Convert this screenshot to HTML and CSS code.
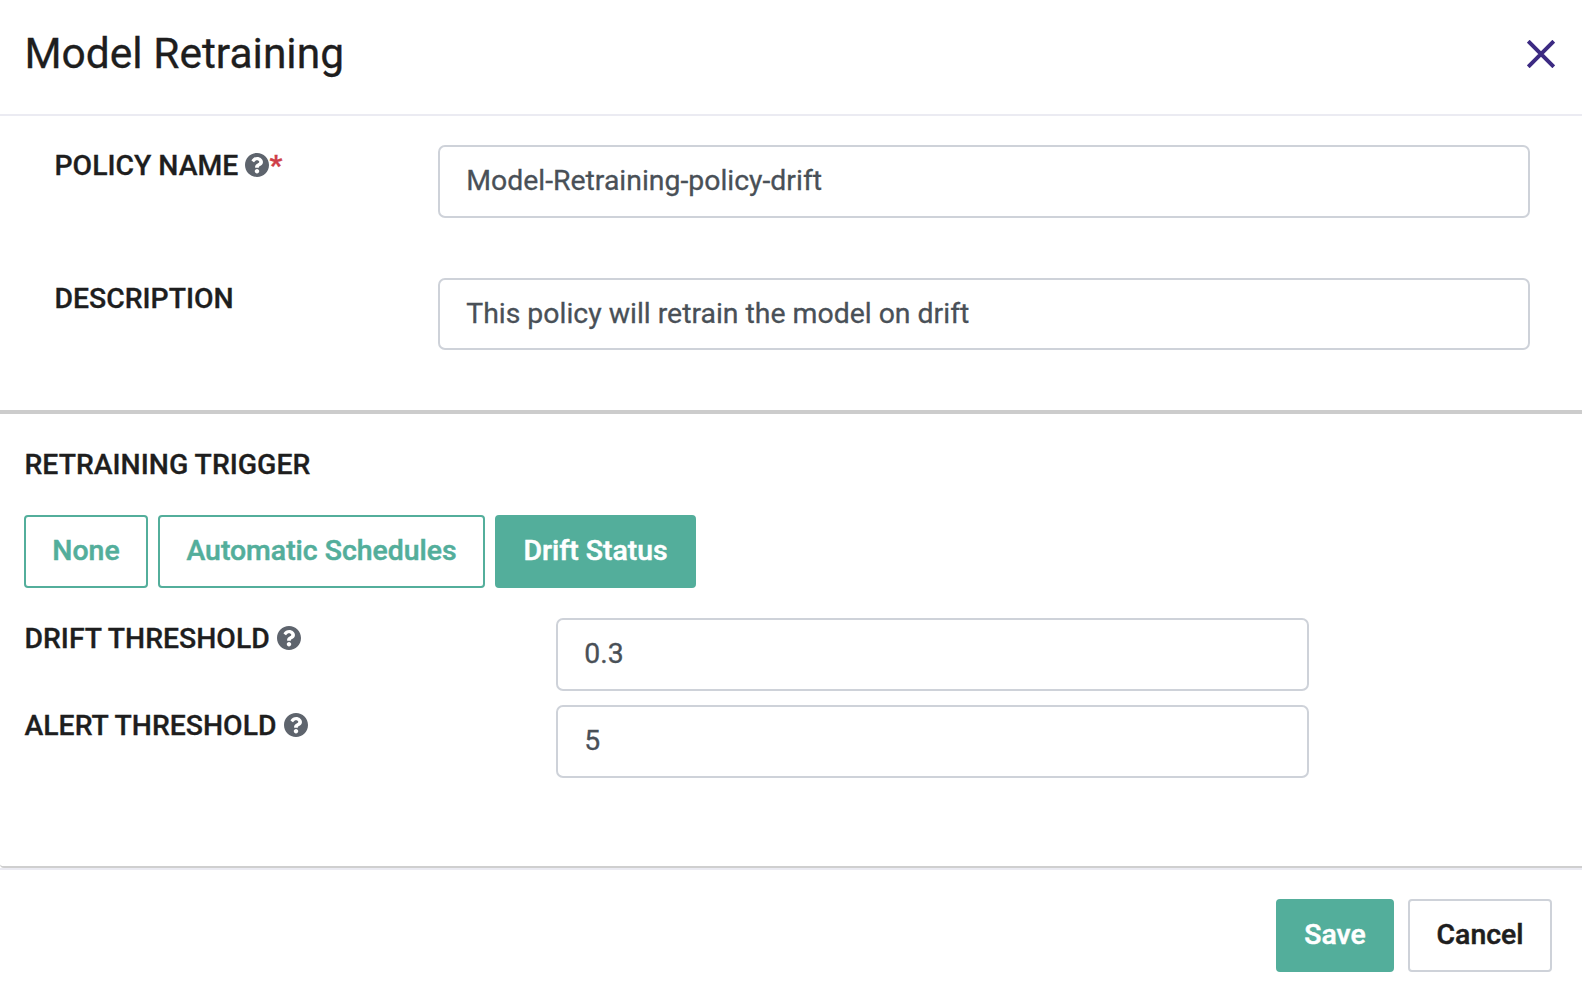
FILE: index.html
```
<!DOCTYPE html>
<html lang="en">
<head>
<meta charset="utf-8">
<title>Model Retraining</title>
<link rel="stylesheet" href="styles.css">
</head>
<body>
<svg class="sprite" aria-hidden="true">
  <symbol id="help" viewBox="8 8 496 496"><path d="M504 256c0 136.997-111.043 248-248 248S8 392.997 8 256C8 119.083 119.043 8 256 8s248 111.083 248 248zM262.655 90c-54.497 0-89.255 22.957-116.549 63.758-3.536 5.286-2.353 12.415 2.715 16.258l34.699 26.31c5.205 3.947 12.621 3.008 16.665-2.122 17.864-22.658 30.113-35.797 57.303-35.797 20.429 0 45.698 13.148 45.698 32.958 0 14.976-12.363 22.667-32.534 33.976C247.128 238.528 216 254.941 216 296v4c0 6.627 5.373 12 12 12h56c6.627 0 12-5.373 12-12v-1.333c0-28.462 83.186-29.647 83.186-106.667 0-58.002-60.165-102-116.531-102zM256 338c-25.365 0-46 20.635-46 46 0 25.364 20.635 46 46 46s46-20.636 46-46c0-25.365-20.635-46-46-46z"/></symbol>
</svg>
<main class="modal">
  <header class="modal-header">
    <h1 class="modal-title">Model Retraining</h1>
    <button class="close" aria-label="Close"><svg class="close-icon" viewBox="0 0 28 28"><path d="M1.2 1.2 26.8 26.8M26.8 1.2 1.2 26.8"/></svg></button>
  </header>
  <section class="details">
    <div class="field">
      <label class="label" for="name">POLICY NAME <svg class="help"><use href="#help"/></svg><span class="required">*</span></label>
      <input class="input" id="name" value="Model-Retraining-policy-drift">
    </div>
    <div class="field">
      <label class="label" for="description">DESCRIPTION</label>
      <input class="input input-description" id="description" value="This policy will retrain the model on drift">
    </div>
  </section>
  <section class="trigger">
    <h2 class="label trigger-title">RETRAINING TRIGGER</h2>
    <div class="options">
      <button class="btn btn-outline option-none">None</button>
      <button class="btn btn-outline option-schedules">Automatic Schedules</button>
      <button class="btn btn-primary option-drift">Drift Status</button>
    </div>
    <div class="threshold">
      <label class="label" for="drift">DRIFT THRESHOLD <svg class="help"><use href="#help"/></svg></label>
      <input class="input" id="drift" value="0.3">
    </div>
    <div class="threshold">
      <label class="label" for="alert">ALERT THRESHOLD <svg class="help"><use href="#help"/></svg></label>
      <input class="input" id="alert" value="5">
    </div>
  </section>
  <footer class="modal-footer">
    <button class="btn btn-primary save">Save</button>
    <button class="btn btn-secondary cancel">Cancel</button>
  </footer>
</main>
</body>
</html>
```
FILE: styles.css
```
* { box-sizing: border-box; }
body {
  margin: 0;
  background: #fff;
  color: #1e1e1e;
  font: 400 28.4px/42px Roboto, sans-serif;
  -webkit-text-stroke: 0.3px;
}
.sprite { display: none; }
.modal { height: 994px; overflow: hidden; }
.modal-header {
  display: flex;
  justify-content: space-between;
  height: 116px;
  padding: 22px 27px 0 24.5px;
  border-bottom: 2px solid #ebebf2;
}
.modal-title { margin: 0; font-size: 42.5px; font-weight: 400; line-height: 64px; }
.close {
  width: 28px;
  height: 28px;
  margin-top: 18px;
  padding: 0;
  border: 0;
  background: none;
}
.close-icon { display: block; width: 28px; height: 28px; fill: none; stroke: #3c2a82; stroke-width: 4; }
.details {
  display: flex;
  flex-direction: column;
  gap: 60px;
  height: 298px;
  padding: 29px 52px 0 54px;
  border-bottom: 4px solid #cccccc;
}
.field { display: grid; grid-template-columns: 384px 1092px; }
.label {
  margin: 0;
  padding-left: 0.5px;
  font-size: 28.36px;
  font-weight: 500;
  line-height: 42px;
  white-space: nowrap;
}
.help { width: 24px; height: 24px; fill: #5e646d; vertical-align: -2px; }
.required { color: #cf3f48; font-weight: 700; }
.input {
  width: 100%;
  height: 73px;
  padding: 0 26px 2px 26.2px;
  border: 2px solid #ced2d9;
  border-radius: 7px;
  background: #fff;
  color: #495057;
  font: inherit;
  -webkit-text-stroke: inherit;
}
.input-description { height: 72px; }
.trigger {
  height: 454px;
  padding: 30px 24px 0;
  border-bottom: 2px solid #cfcfcf;
  border-bottom-left-radius: 4px;
}
.trigger-title { margin-bottom: 29px; }
.options { display: flex; gap: 10px; margin-bottom: 30px; }
.btn {
  height: 73px;
  padding: 0 0 2px;
  border: 2px solid #53ae9b;
  border-radius: 4px;
  background: #fff;
  font: inherit;
  font-weight: 500;
  -webkit-text-stroke: 0.5px;
  color: #1e1e1e;
  white-space: nowrap;
}
.btn-outline { color: #53ae9b; }
.btn-primary { background: #53ae9b; color: #fff; }
.btn-secondary { border-color: #ced2d9; }
.option-none { width: 124px; }
.option-schedules { width: 327px; }
.option-drift { width: 201px; }
.threshold { display: grid; grid-template-columns: 532px 753px; margin-bottom: 14px; }
.modal-footer {
  display: flex;
  justify-content: flex-end;
  gap: 14px;
  height: 126px;
  padding: 29px 30px 0;
  border-top: 2px solid #ebebf2;
}
.save { width: 118px; }
.cancel { width: 144px; }
```
